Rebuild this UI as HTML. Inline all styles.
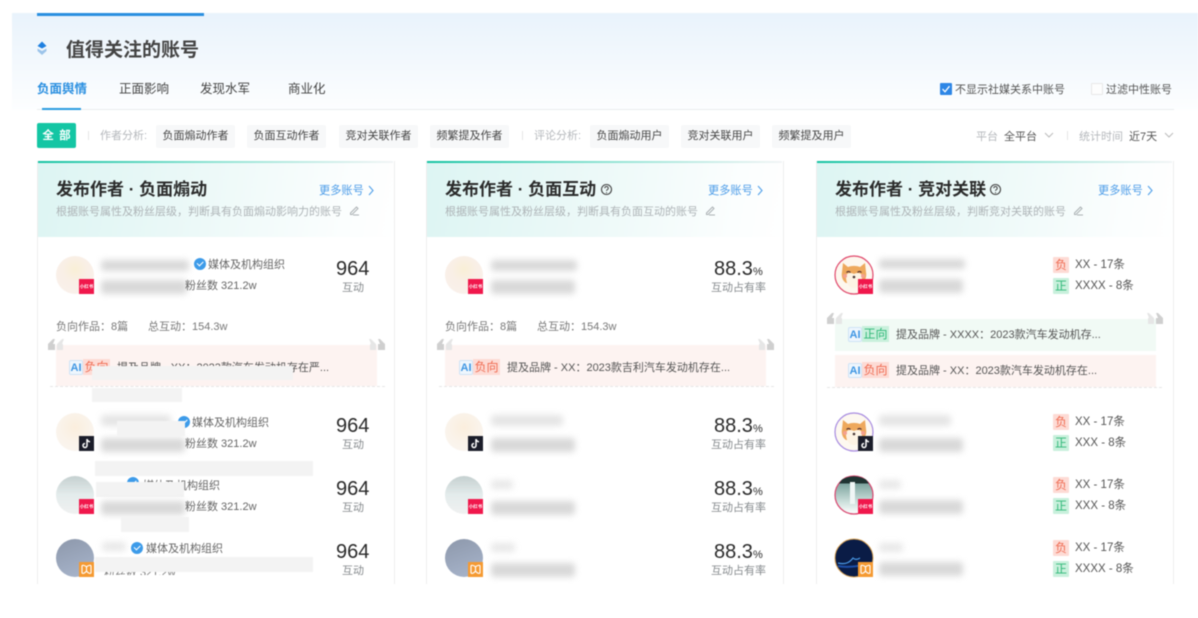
<!DOCTYPE html>
<html lang="zh"><head><meta charset="utf-8"><title>值得关注的账号</title>
<style>
html,body{margin:0;padding:0;background:#fff}
body{width:1198px;height:618px;overflow:hidden;position:relative;font-family:"Liberation Sans","Noto Sans CJK SC",sans-serif;color:#555}
#p{position:absolute;left:0;top:0;width:1198px;height:618px;overflow:hidden;filter:blur(.4px)}
.a{position:absolute;white-space:nowrap;line-height:16px;font-size:11px}
.card .a{margin-top:1px}
.card .a.x{font-size:11.5px}
.b{position:absolute}
.g{color:#b5b8bc}
.tag{position:absolute;top:125px;height:23px;width:79px;background:#f7f8f9;border-radius:2px;text-align:center;line-height:23px;font-size:11px;color:#444;white-space:nowrap}
.card{position:absolute;top:161px;height:423px;width:356px;border-left:1px solid #eee;border-right:1px solid #eee;box-sizing:content-box;overflow:hidden}
.top{position:absolute;left:-1px;top:0;width:100%;height:2px;background:linear-gradient(90deg,#14c3a2,#8fe3d3 50%,#f2f5f6)}
.hd{position:absolute;left:0;top:2px;width:100%;height:74px;background:linear-gradient(100deg,#ddf5f3 0%,#ecf9f8 45%,#fbfefe 85%,#fff 100%)}
.ti{position:absolute;left:18px;top:18px;font-size:17px;line-height:22px;font-weight:700;color:#2b2b2b;white-space:nowrap}
.su{position:absolute;left:18px;top:44px;font-size:11px;line-height:14px;color:#adb3b6;white-space:nowrap}
.mo{position:absolute;left:281px;top:23px;font-size:11.2px;line-height:14px;color:#4c9ce8;white-space:nowrap}
.bl{position:absolute;background:#bdbdbd;filter:blur(3.2px);border-radius:3px;opacity:.58}
.av{position:absolute;width:38px;height:38px;border-radius:50%;overflow:hidden}
.pl{position:absolute;width:15px;height:15px;text-align:center;color:#fff;font-size:4.5px;line-height:15px;font-weight:700;overflow:hidden}
.red{background:#f0184c}.blk{background:#1b1d2a}.org{background:#f59a32}
.num{position:absolute;font-size:20px;line-height:24px;color:#2a2a2a;white-space:nowrap;margin-top:1px}
.lab{position:absolute;font-size:11px;line-height:14px;color:#858a8d;white-space:nowrap;margin-top:1px}
.ov{position:absolute;background:#f3f3f3}
.v{position:absolute;width:12px;height:12px;border-radius:50%;background:#3d9be9}
.v:after{content:"";position:absolute;left:3px;top:2.6px;width:5px;height:2.6px;border-left:1.4px solid #fff;border-bottom:1.4px solid #fff;transform:rotate(-45deg)}
.qp{position:absolute;height:41px;width:321px;background:#fdf3f1}
.ai{position:absolute;width:14px;height:15px;line-height:14px;font-size:11px;font-weight:700;color:#3d95e3;text-align:center;background:#eef6fd;border:1px solid #cfe3f6;box-sizing:border-box;border-radius:2px}
.sen{position:absolute;width:27px;height:16px;line-height:16px;font-size:12px;text-align:center}
.neg{background:#fddbd5;color:#ef6a50}.pos{background:#c9f0dc;color:#2fb878}
.dash{position:absolute;height:0;border-top:1px dashed #e6e6e6}
.s{position:absolute;width:16px;height:16px;line-height:16px;text-align:center;font-size:12px;border-radius:1px}
</style></head><body><div id="p">

<div class="b" style="left:12px;top:13px;width:1186px;height:97px;background:linear-gradient(180deg,#e9f3fc 0%,#f2f8fd 45%,#fdfeff 100%)"></div>
<div class="b" style="left:37px;top:13px;width:167px;height:2.500px;background:#2a8fe0"></div>

<svg class="b" style="left:36px;top:40px" width="12" height="16" viewBox="0 0 12 16"><path d="M6 1.500L10.500 6 6 8.500 1.500 6z" fill="#1f80e0"/><path d="M1.500 8.500L6 11l4.500-2.500V11L6 15 1.500 11z" fill="#9cc4ea"/></svg>
<div class="a" style="left:66px;top:40px;font-size:19px;line-height:22px;font-weight:700;color:#444">值得关注的账号</div>

<div class="a" style="left:37px;top:81px;font-size:12.500px;font-weight:700;color:#2a8fe0">负面舆情</div>
<div class="a" style="left:119px;top:81px;font-size:12.500px;color:#444">正面影响</div>
<div class="a" style="left:200px;top:81px;font-size:12.500px;color:#444">发现水军</div>
<div class="a" style="left:288px;top:81px;font-size:12.500px;color:#444">商业化</div>
<div class="b" style="left:37px;top:109px;width:1137px;height:1px;background:#e9ecee"></div>
<div class="b" style="left:42px;top:108px;width:39px;height:2px;background:#2a9be0"></div>

<div class="b" style="left:940px;top:83px;width:12px;height:12px;background:#2d86e6;border-radius:1px"></div>
<svg class="b" style="left:940px;top:83px" width="12" height="12"><path d="M2.500 6L5 8.800 9.500 3.200" fill="none" stroke="#fff" stroke-width="1.300"/></svg>
<div class="a" style="left:955px;top:81px;color:#555;margin-top:.5px">不显示社媒关系中账号</div>
<div class="b" style="left:1091px;top:83px;width:12px;height:12px;box-sizing:border-box;border:1px solid #e8e8e8;border-radius:1px;background:#fdfdfd"></div>
<div class="a" style="left:1106px;top:81px;color:#555;margin-top:.5px">过滤中性账号</div>

<div class="b" style="left:37px;top:123px;width:39px;height:25px;background:#14c6a4;border-radius:2px;color:#fff;font-size:11.500px;font-weight:700;line-height:26px;text-align:center;word-spacing:2px">全 部</div>
<div class="b" style="left:88px;top:131px;width:1px;height:9px;background:#e5e5e5"></div>
<div class="a g" style="left:100px;top:128px">作者分析:</div>
<div class="tag" style="left:156px">负面煽动作者</div>
<div class="tag" style="left:247px">负面互动作者</div>
<div class="tag" style="left:339px">竞对关联作者</div>
<div class="tag" style="left:430px">频繁提及作者</div>
<div class="b" style="left:522px;top:131px;width:1px;height:9px;background:#e5e5e5"></div>
<div class="a g" style="left:534px;top:128px">评论分析:</div>
<div class="tag" style="left:590px">负面煽动用户</div>
<div class="tag" style="left:681px">竞对关联用户</div>
<div class="tag" style="left:772px">频繁提及用户</div>
<div class="a g" style="left:976px;top:129px">平台</div>
<div class="a" style="left:1004px;top:129px;color:#555">全平台</div>
<svg class="b" style="left:1044px;top:132px" width="10" height="7"><path d="M1 1l4 4 4-4" fill="none" stroke="#bbb"/></svg>
<div class="b" style="left:1067px;top:131px;width:1px;height:9px;background:#e5e5e5"></div>
<div class="a g" style="left:1079px;top:129px">统计时间</div>
<div class="a" style="left:1129px;top:129px;color:#555">近7天</div>
<svg class="b" style="left:1164px;top:132px" width="10" height="7"><path d="M1 1l4 4 4-4" fill="none" stroke="#bbb"/></svg>

<!-- CARD 1 -->
<div class="card" style="left:37px">
  <div class="hd"></div><div class="top"></div>
  <div class="ti">发布作者 · 负面煽动</div>
  <div class="su">根据账号属性及粉丝层级，判断具有负面煽动影响力的账号</div>
  <svg class="b" style="left:311px;top:44px" width="11" height="11"><path d="M1.500 8L7.500 2l1.500 1.500-6 6H1.500zM4 10h6" fill="none" stroke="#aab0b3"/></svg>
  <div class="mo">更多账号</div>
  <svg class="b" style="left:330px;top:24px" width="7" height="11"><path d="M1 1l4 4.500-4 4.500" fill="none" stroke="#5aa5ea" stroke-width="1.200"/></svg>

  <div class="av" style="left:18px;top:95px;background:radial-gradient(circle at 50% 35%,#f9efd6 0,#f9efe6 40%,#faf1ed 100%)"></div>
  <div class="pl red" style="left:41px;top:118px">小红书</div>
  <div class="bl" style="left:63px;top:99px;width:88px;height:11px"></div>
  <div class="bl" style="left:63px;top:119px;width:86px;height:14px"></div>
  <div class="v" style="left:156px;top:97px"></div>
  <div class="a" style="left:170px;top:95px;color:#666">媒体及机构组织</div>
  <div class="a" style="left:147px;top:116px;color:#666">粉丝数 321.2w</div>
  <div class="num" style="left:298px;top:95px">964</div>
  <div class="lab" style="left:304px;top:119px">互动</div>

  <div class="a" style="left:18px;top:157px;color:#777">负向作品：8篇</div>
  <div class="a" style="left:110px;top:157px;color:#777">总互动：154.3w</div>

  <div class="qp" style="left:18px;top:184px"></div>
  <svg class="b" style="left:10px;top:177px" width="16" height="13"><path d="M0 12V6L5 1h2L5 6h2v6z" fill="#cfcfcf"/><path d="M9 12V6l5-5h2l-2 5h1v6z" fill="#e6e6e6"/></svg>
  <svg class="b" style="left:331px;top:177px" width="16" height="13"><path d="M7 12V6L2 1H0l2 5H1v6z" fill="#e6e6e6"/><path d="M16 12V6l-5-5H9l2 5H9v6z" fill="#cfcfcf"/></svg>
  <div class="ai" style="left:31px;top:199px">AI</div>
  <div class="sen neg" style="left:45px;top:198px">负向</div>
  <div class="a" style="left:79px;top:198px;color:#555">提及品牌 - XX：2023款汽车发动机存在严...</div>
  <div class="dash" style="left:12px;top:225px;width:335px"></div>
  <div class="ov" style="left:54px;top:205px;width:201px;height:14px"></div>
  <div class="ov" style="left:54px;top:227px;width:90px;height:14px"></div>

  <div class="av" style="left:18px;top:252px;background:radial-gradient(circle at 50% 38%,#fbeedd 0,#faf3ea 50%,#faf6f2 100%)"></div>
  <div class="pl blk" style="left:41px;top:275px"><svg width="15" height="15" style="display:block"><path d="M8 3v6.500a2 2 0 1 1-2-2M8 3c.3 1.600 1.400 2.600 3 2.800" fill="none" stroke="#fff" stroke-width="1.500"/></svg></div>
  <div class="bl" style="left:63px;top:254px;width:70px;height:11px;opacity:.4"></div>
  <div class="bl" style="left:63px;top:277px;width:84px;height:14px"></div>
  <div class="v" style="left:140px;top:255px"></div>
  <div class="a" style="left:154px;top:253px;color:#666">媒体及机构组织</div>
  <div class="ov" style="left:79px;top:260px;width:68px;height:15px"></div>
  <div class="a" style="left:147px;top:274px;color:#666">粉丝数 321.2w</div>
  <div class="num" style="left:298px;top:252px">964</div>
  <div class="lab" style="left:304px;top:276px">互动</div>
  <div class="ov" style="left:57px;top:300px;width:218px;height:15px"></div>

  <div class="av" style="left:18px;top:315px;background:linear-gradient(180deg,#c5d0d0 0%,#e4ecec 50%,#f0f1f1 100%)"></div>
  <div class="pl red" style="left:41px;top:338px">小红书</div>
  <div class="v" style="left:89px;top:316px"></div>
  <div class="a" style="left:105px;top:316px;color:#666">媒体及机构组织</div>
  <div class="ov" style="left:58px;top:321px;width:88px;height:15px"></div>
  <div class="bl" style="left:63px;top:340px;width:84px;height:14px"></div>
  <div class="a" style="left:147px;top:337px;color:#666">粉丝数 321.2w</div>
  <div class="num" style="left:298px;top:315px">964</div>
  <div class="lab" style="left:304px;top:339px">互动</div>
  <div class="ov" style="left:83px;top:356px;width:68px;height:15px"></div>

  <div class="av" style="left:18px;top:378px;background:linear-gradient(160deg,#8d98ab,#a9b6cd)"></div>
  <div class="pl org" style="left:41px;top:401px"><svg width="15" height="15" style="display:block"><path d="M7.500 5C6 3 3 3 3 4v7c1 1 3 0 4.500-2C9 11 11 12 12 11V4c0-1-3-1-4.500 1zv4" fill="none" stroke="#fff" stroke-width="1.100"/></svg></div>
  <div class="bl" style="left:64px;top:381px;width:24px;height:9px;opacity:.35"></div>
  <div class="v" style="left:93px;top:381px"></div>
  <div class="a" style="left:108px;top:379px;color:#666">媒体及机构组织</div>
  <div class="a" style="left:66px;top:403px;color:#777">粉丝数 321.2w</div>
  <div class="ov" style="left:57px;top:396px;width:218px;height:15px"></div>
  <div class="b" style="left:57px;top:414px;width:150px;height:8px;background:#fff"></div>
  <div class="num" style="left:298px;top:378px">964</div>
  <div class="lab" style="left:304px;top:402px">互动</div>
</div>

<!-- CARD 2 -->
<div class="card" style="left:426px">
  <div class="hd"></div><div class="top"></div>
  <div class="ti">发布作者 · 负面互动</div>
  <svg class="b" style="left:173px;top:22px" width="13" height="13"><circle cx="6.500" cy="6.500" r="5" fill="none" stroke="#444" stroke-width="1.100"/><path d="M4.800 5.200a1.700 1.700 0 1 1 2.500 1.500c-.6.3-.8.6-.8 1.200" fill="none" stroke="#444"/><circle cx="6.500" cy="9.700" r=".6" fill="#444"/></svg>
  <div class="su">根据账号属性及粉丝层级，判断具有负面互动的账号</div>
  <svg class="b" style="left:278px;top:44px" width="11" height="11"><path d="M1.500 8L7.500 2l1.500 1.500-6 6H1.500zM4 10h6" fill="none" stroke="#aab0b3"/></svg>
  <div class="mo">更多账号</div>
  <svg class="b" style="left:330px;top:24px" width="7" height="11"><path d="M1 1l4 4.500-4 4.500" fill="none" stroke="#5aa5ea" stroke-width="1.200"/></svg>

  <div class="av" style="left:18px;top:95px;background:radial-gradient(circle at 50% 35%,#f9efd6 0,#f9efe6 40%,#faf1ed 100%)"></div>
  <div class="pl red" style="left:41px;top:118px">小红书</div>
  <div class="bl" style="left:64px;top:99px;width:86px;height:11px"></div>
  <div class="bl" style="left:64px;top:119px;width:84px;height:14px"></div>
  <div class="num" style="left:287px;top:95px">88.3<span style="font-size:11px">%</span></div>
  <div class="lab" style="left:284px;top:119px">互动占有率</div>

  <div class="a" style="left:18px;top:157px;color:#777">负向作品：8篇</div>
  <div class="a" style="left:110px;top:157px;color:#777">总互动：154.3w</div>

  <div class="qp" style="left:18px;top:184px"></div>
  <svg class="b" style="left:10px;top:177px" width="16" height="13"><path d="M0 12V6L5 1h2L5 6h2v6z" fill="#cfcfcf"/><path d="M9 12V6l5-5h2l-2 5h1v6z" fill="#e6e6e6"/></svg>
  <svg class="b" style="left:331px;top:177px" width="16" height="13"><path d="M7 12V6L2 1H0l2 5H1v6z" fill="#e6e6e6"/><path d="M16 12V6l-5-5H9l2 5H9v6z" fill="#cfcfcf"/></svg>
  <div class="ai" style="left:32px;top:199px">AI</div>
  <div class="sen neg" style="left:46px;top:198px">负向</div>
  <div class="a" style="left:80px;top:198px;color:#555">提及品牌 - XX：2023款吉利汽车发动机存在...</div>
  <div class="dash" style="left:12px;top:225px;width:335px"></div>

  <div class="av" style="left:18px;top:252px;background:radial-gradient(circle at 50% 38%,#fbeedd 0,#faf3ea 50%,#faf6f2 100%)"></div>
  <div class="pl blk" style="left:41px;top:275px"><svg width="15" height="15" style="display:block"><path d="M8 3v6.500a2 2 0 1 1-2-2M8 3c.3 1.600 1.400 2.600 3 2.800" fill="none" stroke="#fff" stroke-width="1.500"/></svg></div>
  <div class="bl" style="left:64px;top:254px;width:72px;height:11px;opacity:.4"></div>
  <div class="bl" style="left:64px;top:277px;width:84px;height:14px"></div>
  <div class="num" style="left:287px;top:252px">88.3<span style="font-size:11px">%</span></div>
  <div class="lab" style="left:284px;top:276px">互动占有率</div>

  <div class="av" style="left:18px;top:315px;background:linear-gradient(180deg,#c5d0d0 0%,#e4ecec 50%,#f0f1f1 100%)"></div>
  <div class="pl red" style="left:41px;top:338px">小红书</div>
  <div class="bl" style="left:64px;top:319px;width:22px;height:9px;opacity:.35"></div>
  <div class="bl" style="left:64px;top:340px;width:84px;height:14px"></div>
  <div class="num" style="left:287px;top:315px">88.3<span style="font-size:11px">%</span></div>
  <div class="lab" style="left:284px;top:339px">互动占有率</div>

  <div class="av" style="left:18px;top:378px;background:linear-gradient(160deg,#8d98ab,#a9b6cd)"></div>
  <div class="pl org" style="left:41px;top:401px"><svg width="15" height="15" style="display:block"><path d="M7.500 5C6 3 3 3 3 4v7c1 1 3 0 4.500-2C9 11 11 12 12 11V4c0-1-3-1-4.500 1zv4" fill="none" stroke="#fff" stroke-width="1.100"/></svg></div>
  <div class="bl" style="left:64px;top:382px;width:24px;height:9px;opacity:.35"></div>
  <div class="bl" style="left:64px;top:402px;width:84px;height:14px"></div>
  <div class="num" style="left:287px;top:378px">88.3<span style="font-size:11px">%</span></div>
  <div class="lab" style="left:284px;top:402px">互动占有率</div>
</div>

<!-- CARD 3 -->
<div class="card" style="left:816px">
  <div class="hd"></div><div class="top"></div>
  <div class="ti">发布作者 · 竞对关联</div>
  <svg class="b" style="left:172px;top:22px" width="13" height="13"><circle cx="6.500" cy="6.500" r="5" fill="none" stroke="#444" stroke-width="1.100"/><path d="M4.800 5.200a1.700 1.700 0 1 1 2.500 1.500c-.6.3-.8.6-.8 1.200" fill="none" stroke="#444"/><circle cx="6.500" cy="9.700" r=".6" fill="#444"/></svg>
  <div class="su">根据账号属性及粉丝层级，判断竞对关联的账号</div>
  <svg class="b" style="left:256px;top:44px" width="11" height="11"><path d="M1.500 8L7.500 2l1.500 1.500-6 6H1.500zM4 10h6" fill="none" stroke="#aab0b3"/></svg>
  <div class="mo">更多账号</div>
  <svg class="b" style="left:330px;top:24px" width="7" height="11"><path d="M1 1l4 4.500-4 4.500" fill="none" stroke="#5aa5ea" stroke-width="1.200"/></svg>

  <svg class="b" style="left:17px;top:94px" width="40" height="40" viewBox="0 0 40 40"><circle cx="20" cy="20" r="19" fill="#fdf7ee" stroke="#e0486c" stroke-width="1.200"/><path d="M9 8l5 4c4-1.500 8-1.500 12 0l5-4 1 9c1 5-1 9-4 11H12c-3-2-5-6-4-11z" fill="#eea85c"/><path d="M12 22c0-4 4-5 8-3 4-2 8-1 8 3 0 6-3 11-8 11s-8-5-8-11z" fill="#fdf3e4"/><path d="M12.500 17.500q2-2 4 0M23.500 17.500q2-2 4 0" fill="none" stroke="#533" stroke-width="1.100"/><circle cx="20" cy="22" r="1.300" fill="#433"/><circle cx="11" cy="21" r="2" fill="#f4a090"/><circle cx="29" cy="21" r="2" fill="#f4a090"/></svg>
  <div class="pl red" style="left:41px;top:118px">小红书</div>
  <div class="bl" style="left:62px;top:98px;width:86px;height:10px"></div>
  <div class="bl" style="left:62px;top:118px;width:84px;height:14px"></div>
  <div class="s neg" style="left:236px;top:96px">负</div><div class="a x" style="left:258px;top:95px">XX - 17条</div>
  <div class="s pos" style="left:236px;top:117px">正</div><div class="a x" style="left:258px;top:116px">XXXX - 8条</div>

  <div class="qp" style="left:18px;top:158px;height:32px;background:#f1faf5"></div>
  <div class="qp" style="left:18px;top:194px;height:32px"></div>
  <svg class="b" style="left:10px;top:151px" width="16" height="13"><path d="M0 12V6L5 1h2L5 6h2v6z" fill="#cfcfcf"/><path d="M9 12V6l5-5h2l-2 5h1v6z" fill="#e6e6e6"/></svg>
  <svg class="b" style="left:330px;top:151px" width="16" height="13"><path d="M7 12V6L2 1H0l2 5H1v6z" fill="#e6e6e6"/><path d="M16 12V6l-5-5H9l2 5H9v6z" fill="#cfcfcf"/></svg>
  <div class="ai" style="left:31px;top:166px">AI</div>
  <div class="sen pos" style="left:45px;top:165px">正向</div>
  <div class="a" style="left:79px;top:165px;color:#555">提及品牌 - XXXX：2023款汽车发动机存...</div>
  <div class="ai" style="left:31px;top:202px">AI</div>
  <div class="sen neg" style="left:45px;top:201px">负向</div>
  <div class="a" style="left:79px;top:201px;color:#555">提及品牌 - XX：2023款汽车发动机存在...</div>
  <div class="dash" style="left:10px;top:226px;width:335px"></div>

  <svg class="b" style="left:17px;top:251px" width="40" height="40" viewBox="0 0 40 40"><circle cx="20" cy="20" r="19" fill="#fdf8f0" stroke="#a78be0" stroke-width="1.200"/><path d="M9 8l5 4c4-1.500 8-1.500 12 0l5-4 1 9c1 5-1 9-4 11H12c-3-2-5-6-4-11z" fill="#eea85c"/><path d="M12 22c0-4 4-5 8-3 4-2 8-1 8 3 0 6-3 11-8 11s-8-5-8-11z" fill="#fdf3e4"/><path d="M12.500 17.500q2-2 4 0M23.500 17.500q2-2 4 0" fill="none" stroke="#533" stroke-width="1.100"/><circle cx="20" cy="22" r="1.300" fill="#433"/><circle cx="11" cy="21" r="2" fill="#f4a090"/><circle cx="29" cy="21" r="2" fill="#f4a090"/></svg>
  <div class="pl blk" style="left:41px;top:275px"><svg width="15" height="15" style="display:block"><path d="M8 3v6.500a2 2 0 1 1-2-2M8 3c.3 1.600 1.400 2.600 3 2.800" fill="none" stroke="#fff" stroke-width="1.500"/></svg></div>
  <div class="bl" style="left:62px;top:254px;width:72px;height:11px;opacity:.4"></div>
  <div class="bl" style="left:62px;top:277px;width:84px;height:14px"></div>
  <div class="s neg" style="left:236px;top:253px">负</div><div class="a x" style="left:258px;top:252px">XX - 17条</div>
  <div class="s pos" style="left:236px;top:274px">正</div><div class="a x" style="left:258px;top:273px">XXX - 8条</div>

  <svg class="b" style="left:17px;top:314px" width="40" height="40" viewBox="0 0 40 40"><defs><linearGradient id="w" x1="0" y1="0" x2="0" y2="1"><stop offset="0" stop-color="#5d8c86"/><stop offset=".7" stop-color="#cfe2de"/><stop offset="1" stop-color="#fff"/></linearGradient></defs><circle cx="20" cy="20" r="19" fill="url(#w)" stroke="#d8456e" stroke-width="1.200"/><path d="M8 4.500Q20-2 32 4.500l3 4H5z" fill="#1f3432"/><rect x="16" y="7" width="5" height="22" fill="#f0f6f5"/></svg>
  <div class="pl red" style="left:41px;top:338px">小红书</div>
  <div class="bl" style="left:62px;top:319px;width:22px;height:9px;opacity:.35"></div>
  <div class="bl" style="left:62px;top:339px;width:84px;height:14px"></div>
  <div class="s neg" style="left:236px;top:316px">负</div><div class="a x" style="left:258px;top:315px">XX - 17条</div>
  <div class="s pos" style="left:236px;top:337px">正</div><div class="a x" style="left:258px;top:336px">XXX - 8条</div>

  <svg class="b" style="left:17px;top:377px" width="40" height="40" viewBox="0 0 40 40"><circle cx="20" cy="20" r="19" fill="#0a1c46" stroke="#d8a050" stroke-width="1"/><path d="M4 25c8 2 12-1 15-5 2 2 4 2 7 0" fill="none" stroke="#4a9ae8" stroke-width="1.200"/><path d="M4 28c10 2 20 0 32-2" fill="none" stroke="#1d4fa8" stroke-width="2"/></svg>
  <div class="pl org" style="left:41px;top:401px"><svg width="15" height="15" style="display:block"><path d="M7.500 5C6 3 3 3 3 4v7c1 1 3 0 4.500-2C9 11 11 12 12 11V4c0-1-3-1-4.500 1zv4" fill="none" stroke="#fff" stroke-width="1.100"/></svg></div>
  <div class="bl" style="left:62px;top:382px;width:24px;height:9px;opacity:.35"></div>
  <div class="bl" style="left:62px;top:401px;width:84px;height:14px"></div>
  <div class="s neg" style="left:236px;top:379px">负</div><div class="a x" style="left:258px;top:378px">XX - 17条</div>
  <div class="s pos" style="left:236px;top:400px">正</div><div class="a x" style="left:258px;top:399px">XXXX - 8条</div>
</div>

</div></body></html>
